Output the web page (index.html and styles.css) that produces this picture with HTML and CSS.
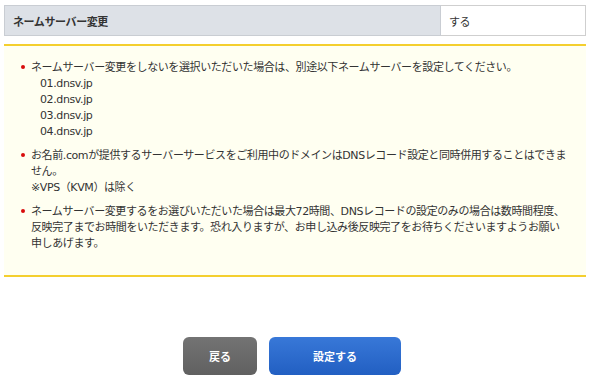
FILE: index.html
```html
<!DOCTYPE html>
<html lang="ja">
<head>
    <meta charset="UTF-8">
    <title>ネームサーバー変更</title>
    <link rel="stylesheet" href="styles.css">
</head>
<body>

<div class="wrap">
    <table class="form-table">
        <tr>
            <th>ネームサーバー変更</th>
            <td>する</td>
        </tr>
    </table>

    <div class="notice">
        <ul>
            <li>ネームサーバー変更をしないを選択いただいた場合は、別途以下ネームサーバーを設定してください。
                <div class="ns">01.dnsv.jp<br>02.dnsv.jp<br>03.dnsv.jp<br>04.dnsv.jp</div>
            </li>
            <li>お名前.comが提供するサーバーサービスをご利用中のドメインはDNSレコード設定と同時併用することはできません。<br>※VPS（KVM）は除く</li>
            <li>ネームサーバー変更するをお選びいただいた場合は最大72時間、DNSレコードの設定のみの場合は数時間程度、反映完了までお時間をいただきます。恐れ入りますが、お申し込み後反映完了をお待ちくださいますようお願い申しあげます。</li>
        </ul>
    </div>

    <div class="buttons">
        <button class="btn btn-back">戻る</button>
        <button class="btn btn-submit">設定する</button>
    </div>
</div>

</body>
</html>
```

FILE: styles.css
```css
body { margin: 0; padding: 0; background: #fff; font-family: "DejaVu Sans", "Noto Sans CJK JP", sans-serif; font-size: 11px; color: #333; letter-spacing: -0.4px; }
.wrap { width: 582px; margin-left: 4px; padding-top: 5px; }
.form-table { width: 100%; border-collapse: collapse; }
.form-table th { background: #dde1e7; border: 1px solid #c9cdd3; text-align: left; font-weight: bold; height: 29px; padding: 0 8px; }
.form-table td { width: 128px; border: 1px solid #cfcfcf; background: #fff; height: 29px; padding: 0 8px; }
.notice { margin-top: 8px; background: #fffff1; border-top: 2px solid #f4cf2e; border-bottom: 2px solid #f4cf2e; padding: 14px 16px 23px 12px; }
.notice ul { list-style: none; margin: 0; padding: 0; }
.notice li { position: relative; padding-left: 15px; line-height: 16px; margin-bottom: 8px; }
.notice li:last-child { margin-bottom: 0; }
.notice li::before { content: ""; position: absolute; left: 5px; top: 5px; width: 4px; height: 4px; border-radius: 50%; background: #d80c0c; }
.ns { padding-left: 9px; }
.buttons { display: flex; justify-content: center; gap: 12px; margin-top: 60px; padding-right: 6px; }
.btn { height: 38px; border: none; border-radius: 6px; color: #fff; font-family: inherit; font-size: 11px; font-weight: bold; letter-spacing: 0; }
.btn-back { width: 74px; background: linear-gradient(#737373, #606060); }
.btn-submit { width: 132px; background: linear-gradient(#3878d8, #225fc2); }
```
